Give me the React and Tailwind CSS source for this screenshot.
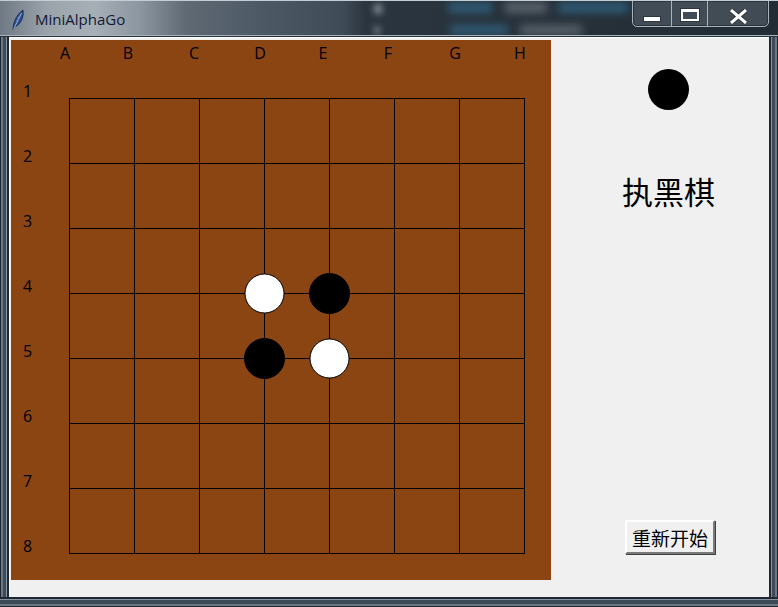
const COLS = ["A", "B", "C", "D", "E", "F", "G", "H"];
const COL_X = [54, 117, 183, 249, 312, 377, 444, 509]; // label centers, canvas coords
const STONES = [
  { c: 3, r: 3, color: "white" },
  { c: 4, r: 3, color: "black" },
  { c: 3, r: 4, color: "black" },
  { c: 4, r: 4, color: "white" },
];

const GRID0 = 58;
const STEP = 65;

const Feather = () => (
  <svg width="12" height="22" viewBox="0 0 12 22">
    <path d="M1 21 C1 14 4 6 11 1 C12 8 9 15 3 18 Z" fill="#2c4c8c" stroke="#13244a" strokeWidth="0.8" />
    <path d="M1.5 20.5 L9.5 4" stroke="#a7bfe8" strokeWidth="0.9" />
    <path d="M4 12 L7 10 M5 9 L8 7" stroke="#6f8fc8" strokeWidth="0.7" />
  </svg>
);

const TitleBar = () => (
  <div className="relative h-[37px] overflow-hidden border-t border-[#c4ccd4] bg-[linear-gradient(90deg,#6f7983_0%,#9aa2aa_6%,#a7afb7_12%,#8c96a0_18%,#5e6974_24%,#4c5864_34%,#3f4b57_44%,#2a353f_47%,#222c35_100%)]">
    {/* blurred window content behind glass */}
    <div className="absolute left-[374px] top-[3px] h-[10px] w-[8px] bg-[#7d868e] blur-[3px]" />
    <div className="absolute left-[374px] top-[25px] h-[9px] w-[6px] bg-[#6d767e] blur-[3px]" />
    <div className="absolute left-[448px] top-[1px] h-[11px] w-[44px] bg-[#2f5a74] blur-[4px]" />
    <div className="absolute left-[505px] top-[1px] h-[11px] w-[42px] bg-[#59626b] blur-[4px]" />
    <div className="absolute left-[558px] top-[1px] h-[11px] w-[70px] bg-[#2f5a74] blur-[4px]" />
    <div className="absolute left-[450px] top-[24px] h-[10px] w-[58px] bg-[#2f5a74] blur-[4px]" />
    <div className="absolute left-[520px] top-[24px] h-[10px] w-[62px] bg-[#59626b] blur-[4px]" />
    <div className="absolute left-0 top-[34px] h-[1px] w-[778px] bg-[#aab3bc]" />
    <div className="absolute left-0 top-[35px] h-[1px] w-[778px] bg-[#27313b]" />

    <div className="absolute left-[12px] top-[8px]">
      <Feather />
    </div>
    <div
      className="absolute left-[35px] top-[8px] text-[15px] leading-[20px] text-[#101a36]"
      style={{ fontFamily: '"Open Sans", "Noto Sans", sans-serif' }}
    >
      MiniAlphaGo
    </div>

    {/* caption buttons */}
    <div className="absolute left-[632px] top-[-1px] flex h-[27px] w-[137px] overflow-hidden rounded-b-[5px] border border-[#a9b2ba] bg-[#4a545e]/80 shadow-[inset_0_0_0_1px_#2a333c]">
      <div className="flex w-[39px] items-end justify-center border-r border-[#a9b2ba] pb-[5px]">
        <div className="h-[4px] w-[16px] bg-white shadow-[0_0_0_1px_#2d3640]" />
      </div>
      <div className="flex w-[36px] items-start justify-center border-r border-[#a9b2ba] pt-[8px]">
        <div className="h-[12px] w-[18px] border-x-[2px] border-t-[3px] border-b-[2px] border-white shadow-[0_0_0_1px_#2d3640]" />
      </div>
      <div className="flex flex-1 items-start justify-center pt-[8px]">
        <svg width="19" height="15" viewBox="0 0 19 15">
          <path d="M2 1 L17 14 M17 1 L2 14" stroke="#2d3640" strokeWidth="5" />
          <path d="M2 1 L17 14 M17 1 L2 14" stroke="#fff" strokeWidth="3" />
        </svg>
      </div>
    </div>
  </div>
);

const Board = () => (
  <div className="relative ml-[2px] mt-[3px] h-[540px] w-[540px] shrink-0 bg-[#8b4513]">
    <svg className="absolute left-0 top-0" width="540" height="540" viewBox="0 0 540 540">
      {Array.from({ length: 8 }).map((_, i) => (
        <g key={i}>
          <line x1={GRID0 + STEP * i + 0.5} y1={GRID0} x2={GRID0 + STEP * i + 0.5} y2={GRID0 + STEP * 7 + 1} stroke="#000" strokeWidth="1" />
          <line x1={GRID0} y1={GRID0 + STEP * i + 0.5} x2={GRID0 + STEP * 7 + 1} y2={GRID0 + STEP * i + 0.5} stroke="#000" strokeWidth="1" />
        </g>
      ))}
      {STONES.map((s, i) => (
        <circle
          key={i}
          cx={GRID0 + STEP * s.c + 0.5}
          cy={GRID0 + STEP * s.r + 0.5}
          r={s.color === "white" ? 19.5 : 20}
          fill={s.color === "white" ? "#fff" : "#000"}
          stroke="#000"
          strokeWidth="1"
        />
      ))}
    </svg>

    {COLS.map((c, i) => (
      <span
        key={c}
        className="absolute -translate-x-1/2 -translate-y-1/2 text-[16px] leading-none text-black"
        style={{ left: COL_X[i], top: 13, fontFamily: '"Open Sans", "Noto Sans", sans-serif' }}
      >
        {c}
      </span>
    ))}
    {Array.from({ length: 8 }).map((_, j) => (
      <span
        key={j}
        className="absolute -translate-x-1/2 -translate-y-1/2 text-[16px] leading-none text-black"
        style={{ left: 16.5, top: 51 + STEP * j, fontFamily: '"Open Sans", "Noto Sans", sans-serif' }}
      >
        {j + 1}
      </span>
    ))}
  </div>
);

const SidePanel = () => (
  <div
    className="flex w-[218px] flex-col items-center pl-[17px]"
    style={{ fontFamily: '"Noto Sans CJK SC", "Noto Sans", sans-serif' }}
  >
    <div className="mt-[32px] h-[41px] w-[41px] rounded-full bg-black" />
    <div className="mt-[61px] h-[40px] text-[31px] leading-[40px] text-black">执黑棋</div>
    <button className="ml-[3px] mt-[309px] flex h-[34px] w-[90px] items-center justify-center border-2 border-b-[#7a7a7a] border-l-white border-r-[#7a7a7a] border-t-white bg-[#f0f0f0] text-[19px] leading-none text-black shadow-[1px_1px_0_#404040]">
      重新开始
    </button>
  </div>
);

export default function App() {
  return (
    <div className="flex h-[607px] w-[778px] flex-col overflow-hidden bg-[#3f4b59]">
      <TitleBar />
      <div className="flex flex-1">
        <div className="w-[9px] shrink-0 bg-[linear-gradient(90deg,#1e2731_0px,#1e2731_1px,#6b7683_1px,#6b7683_3px,#3e4a58_3px,#3e4a58_6px,#8794a2_6px,#8794a2_7px,#1f2832_7px)]" />
        <div className="flex h-[560px] w-[760px] shrink-0 bg-[#f0f0f0] shadow-[inset_1px_1px_0_#ffffff]">
          <Board />
          <SidePanel />
        </div>
        <div className="w-[9px] shrink-0 bg-[linear-gradient(270deg,#1e2731_0px,#1e2731_1px,#6b7683_1px,#6b7683_3px,#3e4a58_3px,#3e4a58_6px,#8794a2_6px,#8794a2_7px,#1f2832_7px)]" />
      </div>
      <div className="h-[10px] shrink-0 bg-[linear-gradient(0deg,#1e2731_0px,#1e2731_1px,#6b7683_1px,#6b7683_3px,#3e4a58_3px,#3e4a58_7px,#8794a2_7px,#8794a2_8px,#1f2832_8px)]" />
    </div>
  );
}
